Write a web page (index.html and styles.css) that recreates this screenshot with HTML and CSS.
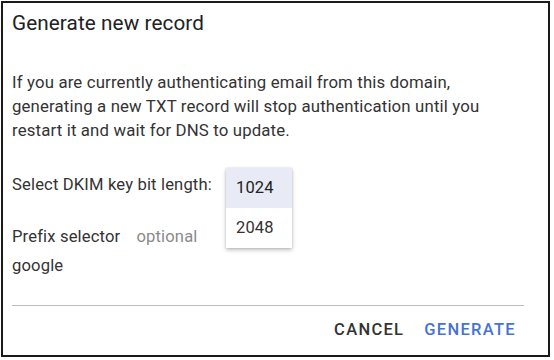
FILE: index.html
```html
<!DOCTYPE html>
<html>
<head>
<meta charset="utf-8">
<link rel="stylesheet" href="styles.css">
</head>
<body>
<div class="dialog">
  <h1 class="title">Generate new record</h1>
  <p class="message">If you are currently authenticating email from this domain, generating a new TXT record will stop authentication until you restart it and wait for DNS to update.</p>
  <div class="select-row">
    <span class="label">Select DKIM key bit length:</span>
    <ul class="menu">
      <li class="menu-item selected">1024</li>
      <li class="menu-item">2048</li>
    </ul>
  </div>
  <div class="prefix-row">
    <span class="label">Prefix selector</span>
    <span class="optional">optional</span>
  </div>
  <div class="prefix-value">google</div>
  <div class="divider"></div>
  <div class="actions">
    <button class="btn btn-cancel">CANCEL</button>
    <button class="btn btn-generate">GENERATE</button>
  </div>
</div>
</body>
</html>
```
FILE: styles.css
```css
* { box-sizing: border-box; }
html, body { margin: 0; padding: 0; background: #fff; }
body {
  font-family: Roboto, "Liberation Sans", Arial, sans-serif;
  color: #333;
  padding: 1px;
}
.dialog {
  position: relative;
  width: 549px;
  height: 356px;
  border: 2px solid #1a1a1a;
  padding: 0 24px 0 9px;
  font-size: 16.6px;
  letter-spacing: 0.15px;
}
.title {
  margin: 8px 0 0;
  font-size: 20.7px;
  line-height: 24px;
  font-weight: 400;
  letter-spacing: 0.1px;
  color: #222;
}
.message {
  margin: 35px 0 0;
  font-size: 16.8px;
  line-height: 24px;
  width: 490px;
}
.select-row {
  margin-top: 31px;
  line-height: 24px;
}
.menu {
  position: absolute;
  left: 223px;
  top: 165px;
  width: 66px;
  margin: 0;
  padding: 0;
  list-style: none;
  background: #fff;
  box-shadow: 0 2px 4px rgba(0,0,0,0.25), 0 0 2px rgba(0,0,0,0.12);
}
.menu-item {
  height: 40px;
  line-height: 40px;
  padding-left: 10px;
  font-size: 16.5px;
  color: #333;
}
.menu-item.selected {
  background: #e8eaf5;
  color: #222;
}
.prefix-row {
  margin-top: 28px;
  line-height: 24px;
  display: flex;
  gap: 16px;
}
.optional { color: #8a8a8a; }
.prefix-value {
  margin-top: 5px;
  line-height: 24px;
}
.divider {
  margin-top: 27px;
  height: 1px;
  background: #bdbdbd;
}
.actions {
  margin-top: 12px;
  display: flex;
  justify-content: flex-end;
  gap: 20px;
  padding-right: 8px;
}
.btn {
  border: 0;
  background: none;
  padding: 0;
  font-family: Roboto, "Liberation Sans", Arial, sans-serif;
  font-size: 16.5px;
  font-weight: 500;
  line-height: 24px;
  letter-spacing: 1.3px;
  cursor: pointer;
}
.btn-cancel { color: #333; }
.btn-generate { color: #4672d6; }
```
